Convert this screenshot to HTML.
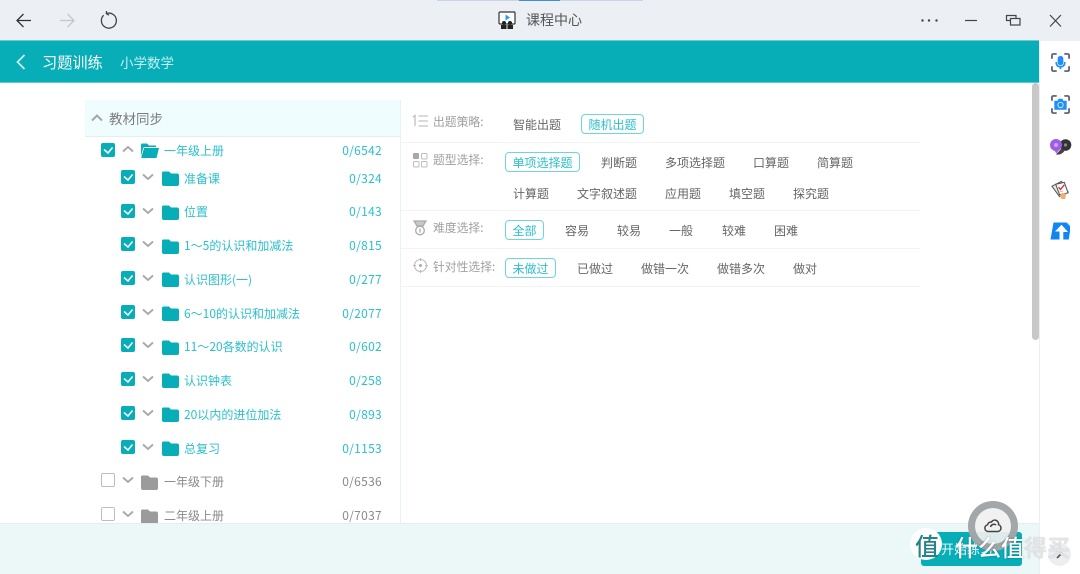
<!DOCTYPE html>
<html lang="zh"><head><meta charset="utf-8"><title>课程中心</title>
<style>
*{box-sizing:border-box}
html,body{margin:0;padding:0;width:1080px;height:574px;overflow:hidden;background:#fff}
body{position:relative;font-family:"Liberation Sans","Noto Sans CJK SC",sans-serif;font-size:12px;color:#666}
#w{position:absolute;left:0;top:0;width:1080px;height:574px;overflow:hidden;filter:blur(.35px)}
.n{font-family:"Noto Sans CJK SC",sans-serif}
.a{position:absolute;white-space:nowrap}
.t{position:absolute;white-space:nowrap;line-height:18px;height:18px;font-family:"Noto Sans CJK SC",sans-serif;font-size:12px}
.c{position:absolute;right:698px;white-space:nowrap;line-height:18px;height:18px;font-family:"Noto Sans CJK SC",sans-serif;font-size:12px;letter-spacing:.3px}
.teal{color:#2cc0cb}.gray{color:#8a8a8a}
.cb{position:absolute;width:14px;height:14px;border-radius:2px;background:#07aeb8}
.cb svg{position:absolute;left:0;top:0}
.ub{position:absolute;width:14px;height:14px;border-radius:2px;border:1px solid #bdbdbd;background:#fff}
.o{position:absolute;white-space:nowrap;height:20px;line-height:19px;font-family:"Noto Sans CJK SC",sans-serif;font-size:12px;color:#666}
.s{color:#2cc0cb;border:1px solid #6fd5dc;border-radius:4px;text-align:center;background:#fff}
.l{position:absolute;white-space:nowrap;line-height:18px;height:18px;font-family:"Noto Sans CJK SC",sans-serif;font-size:11.8px;color:#a0a0a0}
.hr{position:absolute;left:401px;width:519px;height:1px;background:#f3f3f3}
svg{display:block}
</style></head><body><div id="w">
<!-- Title bar -->
<div class="a" style="left:0;top:0;width:1080px;height:41px;background:#eceff4"></div>
<div class="a" style="left:437px;top:0;width:206px;height:1px;background:#c9d4e6"></div>
<div class="a" style="left:519px;top:0;width:41px;height:1px;background:#3f8fe0"></div>
<svg class="a" style="left:14px;top:10px" width="110" height="22" viewBox="0 0 110 22" fill="none">
<path d="M3 10.500H17M9.500 4L3 10.500L9.500 17" stroke="#333" stroke-width="1.300"/>
<path d="M46 10.500H60M53.500 4L60 10.500L53.500 17" stroke="#c4c7cb" stroke-width="1.300"/>
<path d="M92.500 3.500A7.500 7.500 0 1 1 89.700 5.200" stroke="#444" stroke-width="1.300"/>
<path d="M92.500 1L92.300 3.700L95 5.200" stroke="#444" stroke-width="1.200"/>
</svg>
<svg class="a" style="left:498px;top:11px" width="19" height="19" viewBox="0 0 19 19">
<rect x="1" y="1" width="16" height="12" rx="1" fill="#fff" stroke="#333" stroke-width="1.200"/>
<path d="M7.500 3.500L12 6.500L7.500 9.500Z" fill="#2a9fe8"/>
<circle cx="6" cy="12" r="2" fill="#222"/><circle cx="12" cy="12" r="2" fill="#222"/>
<rect x="3" y="14" width="5.500" height="4" fill="#222"/><rect x="9.500" y="14" width="5.500" height="4" fill="#222"/>
</svg>
<div class="a n" style="left:526px;top:10px;font-size:14px;line-height:21px;color:#555">课程中心</div>
<svg class="a" style="left:915px;top:10px" width="155" height="22" viewBox="0 0 155 22" fill="none">
<circle cx="7.500" cy="10.500" r="1.200" fill="#444"/><circle cx="14" cy="10.500" r="1.200" fill="#444"/><circle cx="21.500" cy="10.500" r="1.200" fill="#444"/>
<path d="M50 10.500H62" stroke="#444" stroke-width="1.200"/>
<path d="M95 10.500H91.500V5.500H101V8.500" stroke="#444" stroke-width="1.200"/>
<rect x="95.500" y="8.500" width="9.500" height="6.500" stroke="#444" stroke-width="1.200"/>
<path d="M135 5L146 16.500M146 5L135 16.500" stroke="#444" stroke-width="1.200"/>
</svg>
<!-- Teal bar -->
<div class="a" style="left:0;top:40px;width:1039px;height:43px;background:#07aeb8;border-top:1px solid #6cc9d2;border-bottom:1px solid #5cc8d0"></div>
<svg class="a" style="left:14px;top:53px" width="14" height="18" viewBox="0 0 14 18" fill="none"><path d="M10.500 2L3.500 9L10.500 16" stroke="#cdeef1" stroke-width="1.700"/></svg>
<div class="a n" style="left:42px;top:51px;font-size:15.200px;line-height:22px;color:#fff">习题训练</div>
<div class="a n" style="left:120px;top:52px;font-size:13.500px;line-height:20px;color:#c4eef1">小学数学</div>
<!-- Right rail -->
<div class="a" style="left:1039px;top:41px;width:1px;height:533px;background:#eeeeee"></div>
<svg class="a" style="left:1051px;top:53px" width="19" height="19" viewBox="0 0 20 20" fill="none">
<path d="M1 6V2.500Q1 1 2.500 1H6M14 1H17.500Q19 1 19 2.500V6M19 14V17.500Q19 19 17.500 19H14M6 19H2.500Q1 19 1 17.500V14" stroke="#555a70" stroke-width="1.800"/>
<rect x="7" y="3" width="6" height="10" rx="3" fill="#1e90f5"/>
<path d="M5.500 9.500Q5.500 14.500 10 14.500Q14.500 14.500 14.500 9.500M10 14V17" stroke="#1e90f5" stroke-width="1.700"/>
</svg>
<svg class="a" style="left:1051px;top:95px" width="19" height="19" viewBox="0 0 20 20" fill="none">
<path d="M1 6V2.500Q1 1 2.500 1H6M14 1H17.500Q19 1 19 2.500V6M19 14V17.500Q19 19 17.500 19H14M6 19H2.500Q1 19 1 17.500V14" stroke="#555a70" stroke-width="1.800"/>
<path d="M3.500 6H7L8 4H12L13 6H16.500V15.500H3.500Z" fill="#1e90f5"/>
<circle cx="10" cy="10.500" r="2.800" fill="#1e90f5" stroke="#cfe6fb" stroke-width="1"/>
</svg>
<svg class="a" style="left:1050px;top:138px" width="22" height="18" viewBox="0 0 22 18">
<circle cx="15.500" cy="7" r="5.800" fill="#333"/>
<path d="M6 16.500Q12 17.500 15 12L11 11Z" fill="#444"/>
<circle cx="6" cy="7" r="6" fill="#a05ce6"/>
<path d="M4 12L6.500 15.500L9 12Z" fill="#a05ce6"/>
<circle cx="6" cy="7" r="2" fill="#c9a5f2"/><circle cx="15.500" cy="7" r="1.600" fill="#888"/>
</svg>
<svg class="a" style="left:1051px;top:180px" width="19" height="20" viewBox="0 0 20 20">
<path d="M1 6L11 1L18 12L9 17Z" fill="#e8e8e8" stroke="#555" stroke-width="1.100"/>
<path d="M5 4L14 2L18 13L9 15Z" fill="#fff" stroke="#555" stroke-width="1.100"/>
<path d="M8 7L10 9.500L14 4.500" fill="none" stroke="#e8303a" stroke-width="1.500"/>
<path d="M9 12L13 11" stroke="#9cc8e0" stroke-width="1"/>
<path d="M9 16L12 13L16 14L15 19.500L11 19.500Z" fill="#f0b070"/>
</svg>
<svg class="a" style="left:1050px;top:222px" width="20" height="18" viewBox="0 0 20 18">
<path d="M3.500 .5H17L20 3.500V9L18.800 17.500H13.300V10H18L11.500 2.800L5 9.500H9.500V17.500H.5Z" fill="#1285f5"/>
<path d="M16 .5H17L20 3.500V4.500Z" fill="#7ac2ff"/>
</svg>
<!-- Scrollbar -->
<div class="a" style="left:1032px;top:83px;width:7px;height:257px;border-radius:4px;background:#c8c8c8"></div>
<!-- Left panel header -->
<div class="a" style="left:85px;top:100px;width:315px;height:37px;background:#f0fdfe;border-bottom:1px solid #e4eef0"></div>
<svg class="a" style="left:91px;top:113px" width="12" height="9" viewBox="0 0 12 9" fill="none"><path d="M1 7.500L6 2.500L11 7.500" stroke="#a6a6a6" stroke-width="2"/></svg>
<div class="a n" style="left:109px;top:108px;font-size:13.500px;line-height:20px;color:#7d7d7d">教材同步</div>
<div class="a" style="left:400px;top:100px;width:1px;height:423px;background:#e6f3f5"></div>
<!-- Tree -->
<svg width="0" height="0" style="position:absolute"><defs>
<symbol id="ck" viewBox="0 0 14 14"><path d="M3 6.500L7 10L11.500 4.500" fill="none" stroke="#fff" stroke-width="1.500"/></symbol>
<symbol id="dn" viewBox="0 0 12 8"><path d="M1 1.500L6 6L11 1.500" fill="none" stroke="#a9a9a9" stroke-width="1.900"/></symbol>
<symbol id="up" viewBox="0 0 12 8"><path d="M1 6.500L6 2L11 6.500" fill="none" stroke="#a9a9a9" stroke-width="1.900"/></symbol>
<symbol id="f" viewBox="0 0 17 15"><path d="M0 2Q0 .5 1.500 .5H7L9 2.500H15Q17 2.500 17 4.500V13Q17 15 15 15H2Q0 15 0 13Z"/></symbol>
</defs></svg>

<div class="cb" style="left:101px;top:143px"><svg width="14" height="14"><use href="#ck"/></svg></div>
<svg class="a" style="left:122px;top:145px" width="12" height="8"><use href="#up"/></svg>
<svg class="a" style="left:141px;top:143px" width="18" height="15" viewBox="0 0 18 15"><path d="M0 13V2Q0 .5 1.500 .5H6L8 2.500H15V4H4Q2.500 4 2 5.500L0 13Z" fill="#07aeb8"/><path d="M3 5H18L15.500 15H1Q0 15 .4 14Z" fill="#07aeb8"/></svg>
<div class="t teal" style="left:164px;top:142px">一年级上册</div><div class="c teal" style="top:142px">0/6542</div>

<div class="cb" style="left:121px;top:170px"><svg width="14" height="14"><use href="#ck"/></svg></div>
<svg class="a" style="left:142px;top:173px" width="12" height="8"><use href="#dn"/></svg>
<svg class="a" style="left:162px;top:171px" width="17" height="15" fill="#07aeb8"><use href="#f"/></svg>
<div class="t teal" style="left:184px;top:170px">准备课</div><div class="c teal" style="top:170px">0/324</div>

<div class="cb" style="left:121px;top:204px"><svg width="14" height="14"><use href="#ck"/></svg></div>
<svg class="a" style="left:142px;top:207px" width="12" height="8"><use href="#dn"/></svg>
<svg class="a" style="left:162px;top:205px" width="17" height="15" fill="#07aeb8"><use href="#f"/></svg>
<div class="t teal" style="left:184px;top:203px">位置</div><div class="c teal" style="top:203px">0/143</div>

<div class="cb" style="left:121px;top:237px"><svg width="14" height="14"><use href="#ck"/></svg></div>
<svg class="a" style="left:142px;top:240px" width="12" height="8"><use href="#dn"/></svg>
<svg class="a" style="left:162px;top:239px" width="17" height="15" fill="#07aeb8"><use href="#f"/></svg>
<div class="t teal" style="left:184px;top:237px">1～5的认识和加减法</div><div class="c teal" style="top:237px">0/815</div>

<div class="cb" style="left:121px;top:271px"><svg width="14" height="14"><use href="#ck"/></svg></div>
<svg class="a" style="left:142px;top:274px" width="12" height="8"><use href="#dn"/></svg>
<svg class="a" style="left:162px;top:272px" width="17" height="15" fill="#07aeb8"><use href="#f"/></svg>
<div class="t teal" style="left:184px;top:271px">认识图形(一)</div><div class="c teal" style="top:271px">0/277</div>

<div class="cb" style="left:121px;top:305px"><svg width="14" height="14"><use href="#ck"/></svg></div>
<svg class="a" style="left:142px;top:308px" width="12" height="8"><use href="#dn"/></svg>
<svg class="a" style="left:162px;top:306px" width="17" height="15" fill="#07aeb8"><use href="#f"/></svg>
<div class="t teal" style="left:184px;top:305px">6～10的认识和加减法</div><div class="c teal" style="top:305px">0/2077</div>

<div class="cb" style="left:121px;top:338px"><svg width="14" height="14"><use href="#ck"/></svg></div>
<svg class="a" style="left:142px;top:341px" width="12" height="8"><use href="#dn"/></svg>
<svg class="a" style="left:162px;top:340px" width="17" height="15" fill="#07aeb8"><use href="#f"/></svg>
<div class="t teal" style="left:184px;top:338px">11～20各数的认识</div><div class="c teal" style="top:338px">0/602</div>

<div class="cb" style="left:121px;top:372px"><svg width="14" height="14"><use href="#ck"/></svg></div>
<svg class="a" style="left:142px;top:375px" width="12" height="8"><use href="#dn"/></svg>
<svg class="a" style="left:162px;top:373px" width="17" height="15" fill="#07aeb8"><use href="#f"/></svg>
<div class="t teal" style="left:184px;top:372px">认识钟表</div><div class="c teal" style="top:372px">0/258</div>

<div class="cb" style="left:121px;top:406px"><svg width="14" height="14"><use href="#ck"/></svg></div>
<svg class="a" style="left:142px;top:409px" width="12" height="8"><use href="#dn"/></svg>
<svg class="a" style="left:162px;top:407px" width="17" height="15" fill="#07aeb8"><use href="#f"/></svg>
<div class="t teal" style="left:184px;top:406px">20以内的进位加法</div><div class="c teal" style="top:406px">0/893</div>

<div class="cb" style="left:121px;top:440px"><svg width="14" height="14"><use href="#ck"/></svg></div>
<svg class="a" style="left:142px;top:443px" width="12" height="8"><use href="#dn"/></svg>
<svg class="a" style="left:162px;top:441px" width="17" height="15" fill="#07aeb8"><use href="#f"/></svg>
<div class="t teal" style="left:184px;top:440px">总复习</div><div class="c teal" style="top:440px">0/1153</div>

<div class="ub" style="left:101px;top:473px"></div>
<svg class="a" style="left:122px;top:476px" width="12" height="8"><use href="#dn"/></svg>
<svg class="a" style="left:141px;top:475px" width="17" height="15" fill="#9b9b9b"><use href="#f"/></svg>
<div class="t gray" style="left:164px;top:473px">一年级下册</div><div class="c gray" style="top:473px">0/6536</div>

<div class="ub" style="left:101px;top:507px"></div>
<svg class="a" style="left:122px;top:510px" width="12" height="8"><use href="#dn"/></svg>
<svg class="a" style="left:141px;top:509px" width="17" height="15" fill="#9b9b9b"><use href="#f"/></svg>
<div class="t gray" style="left:164px;top:507px">二年级上册</div><div class="c gray" style="top:507px">0/7037</div>

<!-- Right options -->
<div class="hr" style="top:142px"></div><div class="hr" style="top:210px"></div><div class="hr" style="top:248px"></div><div class="hr" style="top:286px"></div>
<svg class="a" style="left:412px;top:114px" width="17" height="14" viewBox="0 0 17 14" fill="none" stroke="#b5b5b5" stroke-width="1.100"><path d="M1 3L3 1.500V12"/><path d="M6.500 2H16M6.500 7H16M6.500 12H16"/></svg>
<svg class="a" style="left:413px;top:153px" width="15" height="15" viewBox="0 0 15 15"><rect x="0" y="0" width="6" height="6" rx="1" fill="#a8a8a8"/><rect x="8.500" y=".5" width="5.500" height="5.500" rx="1" fill="none" stroke="#bdbdbd"/><rect x=".5" y="8.500" width="5.500" height="5.500" rx="1" fill="none" stroke="#bdbdbd"/><rect x="8.500" y="8.500" width="5.500" height="5.500" rx="1" fill="none" stroke="#bdbdbd"/></svg>
<svg class="a" style="left:413px;top:220px" width="14" height="16" viewBox="0 0 14 16" fill="none" stroke="#aaa" stroke-width="1.300"><path d="M1 1H13L10 6H4Z" fill="#c8c8c8"/><circle cx="7" cy="10.500" r="4.300"/><path d="M7 8.500V12.500"/></svg>
<svg class="a" style="left:413px;top:258px" width="15" height="15" viewBox="0 0 15 15" fill="none" stroke="#bbb" stroke-width="1.100"><circle cx="7.500" cy="7.500" r="6"/><path d="M7.500 0V3M7.500 12V15M0 7.500H3M12 7.500H15"/><circle cx="7.500" cy="7.500" r="1.500" fill="#aaa" stroke="none"/></svg>

<div class="l" style="left:433px;top:113px">出题策略:</div>
<div class="l" style="left:433px;top:151px">题型选择:</div>
<div class="l" style="left:433px;top:219px">难度选择:</div>
<div class="l" style="left:433px;top:258px">针对性选择:</div>

<div class="o" style="left:513px;top:115px">智能出题</div>
<div class="o s" style="left:581px;top:114px;width:63px">随机出题</div>

<div class="o s" style="left:505px;top:152px;width:75px">单项选择题</div>
<div class="o" style="left:601px;top:153px">判断题</div>
<div class="o" style="left:665px;top:153px">多项选择题</div>
<div class="o" style="left:753px;top:153px">口算题</div>
<div class="o" style="left:817px;top:153px">简算题</div>

<div class="o" style="left:513px;top:184px">计算题</div>
<div class="o" style="left:577px;top:184px">文字叙述题</div>
<div class="o" style="left:665px;top:184px">应用题</div>
<div class="o" style="left:729px;top:184px">填空题</div>
<div class="o" style="left:793px;top:184px">探究题</div>

<div class="o s" style="left:505px;top:220px;width:39px">全部</div>
<div class="o" style="left:565px;top:221px">容易</div>
<div class="o" style="left:617px;top:221px">较易</div>
<div class="o" style="left:669px;top:221px">一般</div>
<div class="o" style="left:722px;top:221px">较难</div>
<div class="o" style="left:774px;top:221px">困难</div>

<div class="o s" style="left:505px;top:258px;width:51px">未做过</div>
<div class="o" style="left:577px;top:259px">已做过</div>
<div class="o" style="left:641px;top:259px">做错一次</div>
<div class="o" style="left:717px;top:259px">做错多次</div>
<div class="o" style="left:793px;top:259px">做对</div>

<!-- Bottom bar -->
<div class="a" style="left:0;top:523px;width:1039px;height:51px;background:#ecf7f8;border-top:1px solid #e2eeef"></div>
<div class="a" style="left:921px;top:532px;width:101px;height:34px;border-radius:3px;background:#07aeb8"></div>
<div class="a n" style="left:941px;top:540px;font-size:13px;line-height:18px;color:#e8fbfc">开始练习</div>
<!-- Floating button -->
<div class="a" style="left:1048px;top:543px;width:23px;height:23px;border-radius:50%;background:#eceef1"></div>
<svg class="a" style="left:1055px;top:551px" width="10" height="9" viewBox="0 0 10 9"><path d="M2 7L7 2" stroke="#555" stroke-width="1.600"/></svg>
<div class="a" style="left:968px;top:501px;width:50px;height:50px;border-radius:50%;background:rgba(240,240,240,.92);border:7px solid rgba(140,146,150,.78)"></div>
<svg class="a" style="left:983px;top:518px" width="20" height="15" viewBox="0 0 20 15" fill="none" stroke="#444" stroke-width="1.500"><path d="M5 13.500H15A3.500 3.500 0 0 0 15.500 6.700A3.800 3.800 0 0 0 8.500 4A3.500 3.500 0 0 0 4.500 6.800A3.400 3.400 0 0 0 5 13.500Z"/><path d="M7.500 9A3.500 3.500 0 0 1 13 7"/></svg>
<!-- Watermark -->
<div class="a" style="left:910px;top:528px;width:32px;height:32px;border-radius:50%;background:#fff"></div>
<div class="a n" style="left:915px;top:530px;font-size:24px;line-height:30px;font-weight:500;color:#27828c">值</div>
<div class="a n" style="left:955px;top:530px;font-size:23px;line-height:32px;font-weight:500;color:#fff;text-shadow:0 0 2px rgba(0,0,0,.3)">什么值<span style="color:#e2e4e5;text-shadow:0 0 1px rgba(0,0,0,.25)">得买</span></div>
</div></body></html>
